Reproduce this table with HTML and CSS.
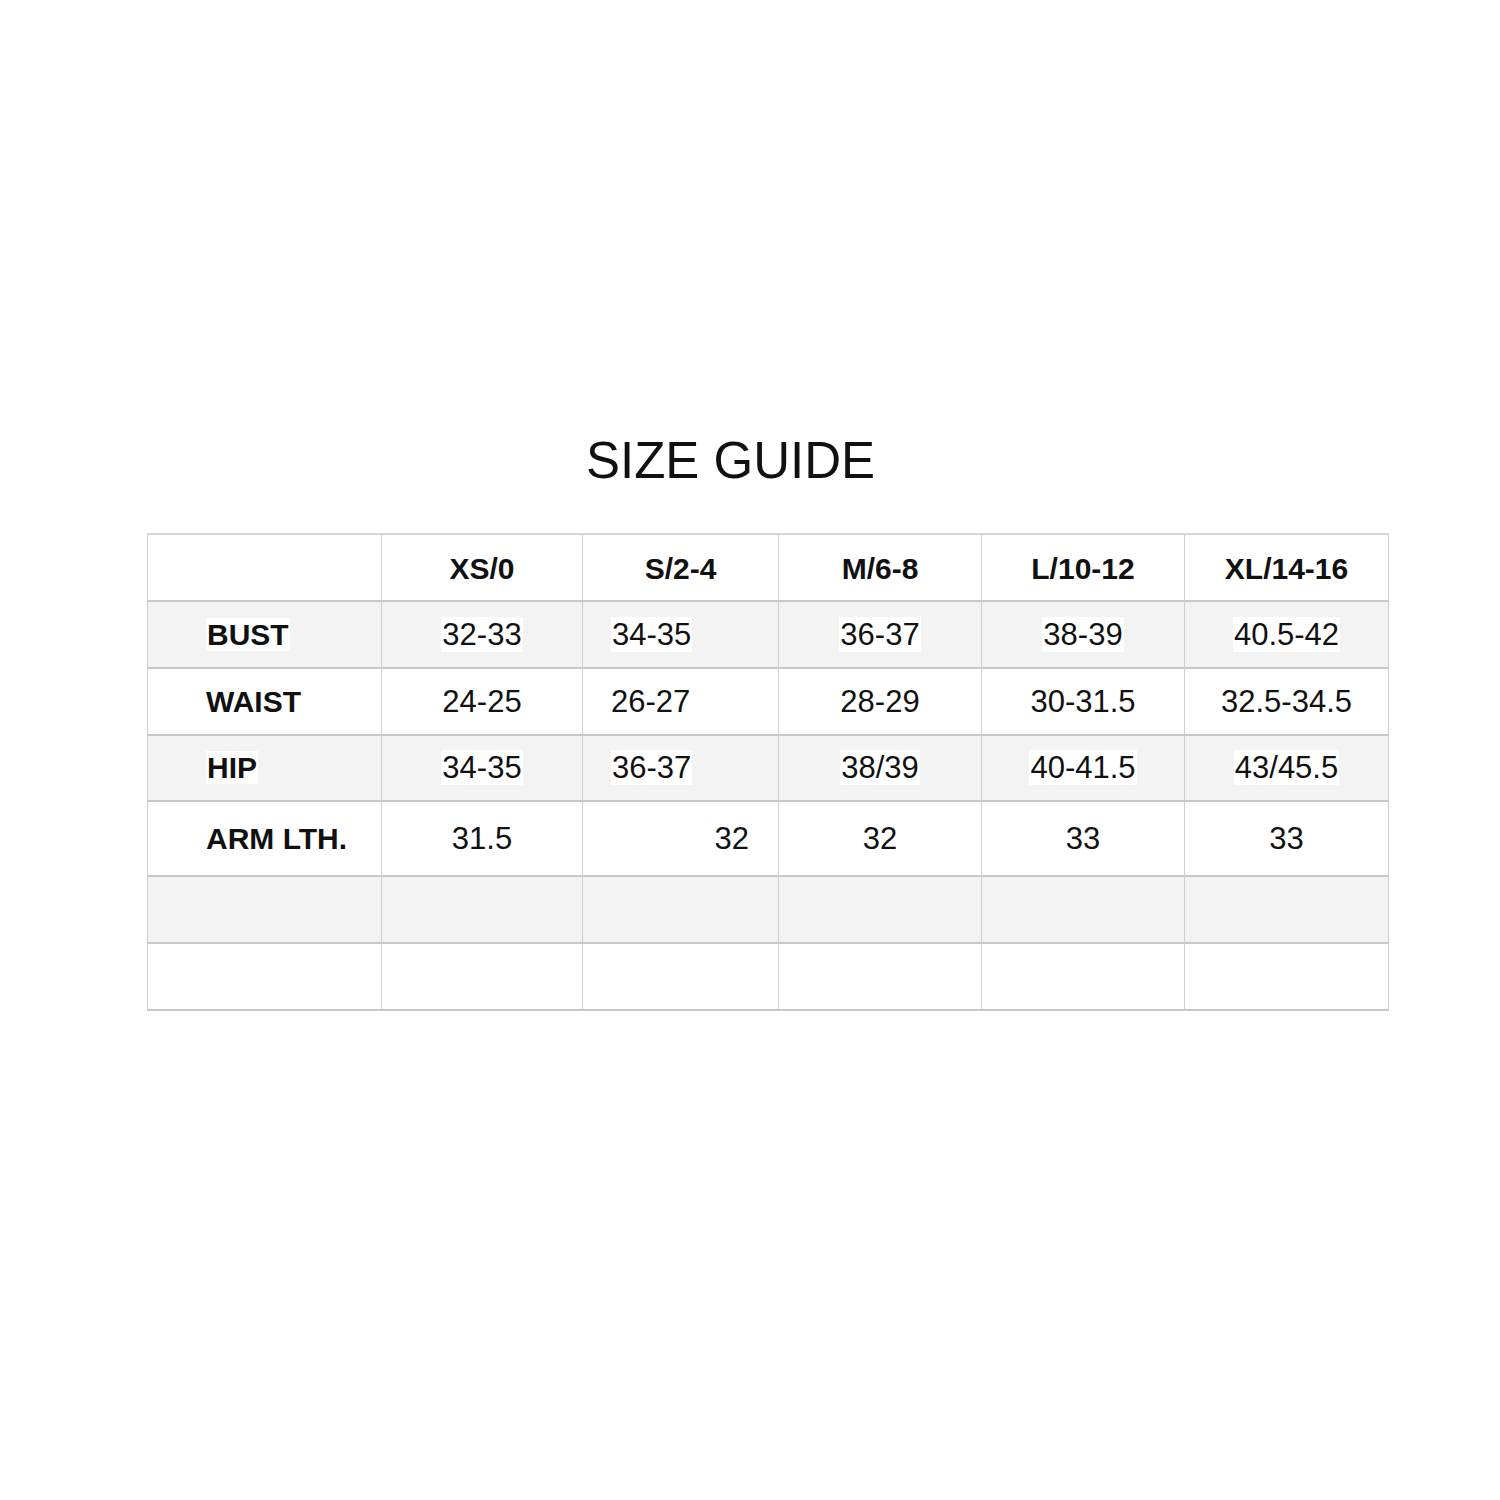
FILE: index.html
```html
<!DOCTYPE html>
<html lang="en">
<head>
<meta charset="utf-8">
<title>Size Guide</title>
<link rel="stylesheet" href="styles.css">
</head>
<body>
<main class="page">
  <h1 class="title">SIZE GUIDE</h1>
  <table class="sizes">
    <colgroup>
      <col class="c-label">
      <col class="c-xs">
      <col class="c-s">
      <col class="c-m">
      <col class="c-l">
      <col class="c-xl">
    </colgroup>
    <thead>
      <tr class="head">
        <th></th>
        <th>XS/0</th>
        <th>S/2-4</th>
        <th>M/6-8</th>
        <th>L/10-12</th>
        <th>XL/14-16</th>
      </tr>
    </thead>
    <tbody>
      <tr class="shade">
        <td class="label"><span class="hl">BUST</span></td>
        <td><span class="hl">32-33</span></td>
        <td class="left"><span class="hl">34-35</span></td>
        <td><span class="hl">36-37</span></td>
        <td><span class="hl">38-39</span></td>
        <td><span class="hl">40.5-42</span></td>
      </tr>
      <tr>
        <td class="label">WAIST</td>
        <td>24-25</td>
        <td class="left">26-27</td>
        <td>28-29</td>
        <td>30-31.5</td>
        <td>32.5-34.5</td>
      </tr>
      <tr class="shade short">
        <td class="label"><span class="hl">HIP</span></td>
        <td><span class="hl">34-35</span></td>
        <td class="left"><span class="hl">36-37</span></td>
        <td><span class="hl">38/39</span></td>
        <td><span class="hl">40-41.5</span></td>
        <td><span class="hl">43/45.5</span></td>
      </tr>
      <tr class="tall">
        <td class="label">ARM LTH.</td>
        <td>31.5</td>
        <td class="right">32</td>
        <td>32</td>
        <td>33</td>
        <td>33</td>
      </tr>
      <tr class="shade">
        <td></td><td></td><td></td><td></td><td></td><td></td>
      </tr>
      <tr>
        <td></td><td></td><td></td><td></td><td></td><td></td>
      </tr>
    </tbody>
  </table>
</main>
</body>
</html>
```

FILE: styles.css
```css
html, body {
  margin: 0;
  padding: 0;
  background: #ffffff;
}

body {
  font-family: "Liberation Sans", Arial, Helvetica, sans-serif;
  color: #111111;
}

.page {
  padding-top: 436px;
  padding-left: 147px;
}

.title {
  margin: 0 0 0 439px;
  font-size: 51px;
  font-weight: 400;
  line-height: 50px;
  letter-spacing: 0;
}

.sizes {
  margin-top: 47px;
  border-collapse: collapse;
  table-layout: fixed;
  width: 1241px;
  border-top: 2px solid #d6d6d6;
}

.c-label { width: 234px; }
.c-xs { width: 201px; }
.c-s { width: 196px; }
.c-m { width: 203px; }
.c-l { width: 203px; }
.c-xl { width: 204px; }

.sizes th,
.sizes td {
  height: 65px;
  padding: 0;
  border-left: 1px solid #cfcfcf;
  border-right: 1px solid #cfcfcf;
  border-bottom: 2px solid #c8c8c8;
  text-align: center;
  vertical-align: middle;
  font-size: 31px;
  font-weight: 400;
  line-height: 36px;
}

.sizes th {
  font-size: 30px;
  font-weight: 700;
  padding-top: 3px;
  height: 62px;
}

.sizes tr.short td {
  height: 64px;
}

.sizes tr.tall td {
  height: 73px;
}

.sizes tr.shade td {
  background: #f3f3f3;
}

.sizes td.label {
  text-align: left;
  padding-left: 58px;
  font-size: 30px;
  font-weight: 700;
}

.sizes td.left {
  text-align: left;
  padding-left: 28px;
}

.sizes td.right {
  text-align: right;
  padding-right: 29px;
}

.hl {
  background: #ffffff;
  padding: 0 1px;
}
```
